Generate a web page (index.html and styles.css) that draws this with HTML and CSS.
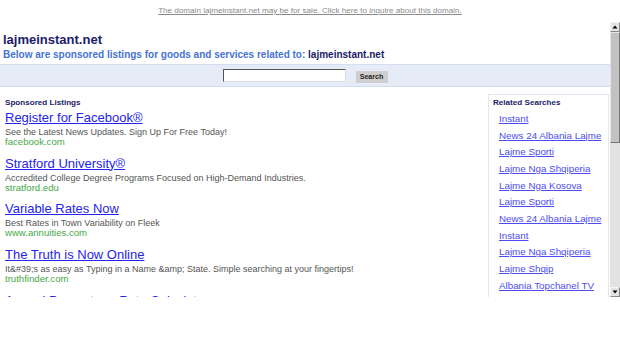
FILE: index.html
```html
<!DOCTYPE html>
<html lang="en">
<head>
    <meta charset="UTF-8">
    <meta name="viewport" content="width=device-width, initial-scale=1.0">
    <title>lajmeinstant.net</title>
    <link rel="stylesheet" href="styles.css">
</head>
<body>
    <div class="sale">
        <a href="#">The domain lajmeinstant.net may be for sale. Click here to inquire about this domain.</a>
    </div>

    <div class="frame">
        <div class="page">
            <div class="top">
                <h1>lajmeinstant.net</h1>
                <p class="intro">Below are sponsored listings for goods and services related to: <b>lajmeinstant.net</b></p>
            </div>

            <div class="search-bar">
                <input type="text" class="search-input">
                <button class="search-btn">Search</button>
            </div>

            <div class="results">
                <div class="listings">
                    <h2>Sponsored Listings</h2>

                    <div class="ad">
                        <a href="#" class="ad-title">Register for Facebook®</a>
                        <div class="ad-desc">See the Latest News Updates. Sign Up For Free Today!</div>
                        <div class="ad-url">facebook.com</div>
                    </div>
                    <div class="ad">
                        <a href="#" class="ad-title">Stratford University®</a>
                        <div class="ad-desc">Accredited College Degree Programs Focused on High-Demand Industries.</div>
                        <div class="ad-url">stratford.edu</div>
                    </div>
                    <div class="ad">
                        <a href="#" class="ad-title">Variable Rates Now</a>
                        <div class="ad-desc">Best Rates in Town Variability on Fleek</div>
                        <div class="ad-url">www.annuities.com</div>
                    </div>
                    <div class="ad">
                        <a href="#" class="ad-title">The Truth is Now Online</a>
                        <div class="ad-desc">It&amp;#39;s as easy as Typing in a Name &amp;amp; State. Simple searching at your fingertips!</div>
                        <div class="ad-url">truthfinder.com</div>
                    </div>
                    <div class="ad">
                        <a href="#" class="ad-title">Annual Percentage Rate Calculator</a>
                    </div>
                </div>

                <div class="related">
                    <h2>Related Searches</h2>
                    <ul>
                        <li><a href="#">Instant</a></li>
                        <li><a href="#">News 24 Albania Lajme</a></li>
                        <li><a href="#">Lajme Sporti</a></li>
                        <li><a href="#">Lajme Nga Shqiperia</a></li>
                        <li><a href="#">Lajme Nga Kosova</a></li>
                        <li><a href="#">Lajme Sporti</a></li>
                        <li><a href="#">News 24 Albania Lajme</a></li>
                        <li><a href="#">Instant</a></li>
                        <li><a href="#">Lajme Nga Shqiperia</a></li>
                        <li><a href="#">Lajme Shqip</a></li>
                        <li><a href="#">Albania Topchanel TV</a></li>
                    </ul>
                </div>
            </div>
        </div>

        <div class="scrollbar">
            <div class="sb-btn">
                <svg width="8" height="8" viewBox="0 0 8 8"><path d="M1.5 5.5 L4 2.5 L6.5 5.5 Z" fill="#000"/></svg>
            </div>
            <div class="sb-thumb"></div>
            <div class="sb-track"></div>
            <div class="sb-btn">
                <svg width="8" height="8" viewBox="0 0 8 8"><path d="M1.5 2.5 L4 5.5 L6.5 2.5 Z" fill="#000"/></svg>
            </div>
        </div>
    </div>
</body>
</html>
```

FILE: styles.css
```css
* {
    margin: 0;
    padding: 0;
    box-sizing: border-box;
}

body {
    font-family: "Liberation Sans", Arial, sans-serif;
    background-color: #fff;
    color: #333;
}

.sale {
    height: 20px;
    text-align: center;
    font-size: 8.1px;
    line-height: 21px;
}

.sale a {
    color: #8a8a8a;
}

.frame {
    display: flex;
    height: 277px;
    overflow: hidden;
}

.page {
    flex: 1;
    min-width: 0;
    overflow: hidden;
}

.top {
    padding: 12px 3px 3px;
}

.top h1 {
    font-size: 13px;
    line-height: 16px;
    color: #1b1b6b;
}

.intro {
    font-size: 10px;
    font-weight: bold;
    line-height: 13px;
    color: #4673d8;
}

.intro b {
    color: #1b1b6b;
}

.search-bar {
    display: flex;
    justify-content: center;
    align-items: flex-start;
    gap: 10px;
    height: 23px;
    padding-top: 4px;
    background-color: #e5ecf8;
    border-top: 1px solid #d3ddf2;
    border-bottom: 1px solid #d3ddf2;
}

.search-input {
    width: 123px;
    height: 13px;
    background: #fff;
    border: 1px solid #dcdcdc;
    border-top-color: #555;
    border-left-color: #555;
    outline: none;
}

.search-btn {
    margin-top: 2px;
    width: 32px;
    height: 12px;
    background-color: #cfcfcf;
    border: none;
    font-family: inherit;
    font-size: 7.1px;
    font-weight: bold;
    color: #222;
}

.results {
    display: flex;
}

.listings {
    flex: 1;
    padding: 11px 0 0 5px;
    white-space: nowrap;
}

h2 {
    font-size: 8.1px;
    line-height: 10px;
    color: #1b1b6b;
    margin-bottom: 3px;
}

.ad {
    margin-bottom: 9.7px;
}

.ad-title {
    display: block;
    font-size: 13px;
    line-height: 14px;
    color: #2424f0;
}

.ad-desc {
    margin-top: 2px;
    font-size: 9px;
    line-height: 10px;
    color: #555;
}

.ad-url {
    font-size: 9.6px;
    line-height: 10px;
    color: #45a845;
}

.related {
    width: 121px;
    margin: 7px 1px 0 0;
    padding: 3px 0 0 4px;
    border: 1px solid #dfe6f6;
}

.related ul {
    list-style: none;
    padding-left: 6px;
}

.related li {
    font-size: 9.8px;
    line-height: 16.67px;
}

.related li a {
    color: #4c4cf0;
}

.scrollbar {
    width: 10px;
    display: flex;
    flex-direction: column;
    padding-top: 2px;
    background: #fff;
}

.sb-btn {
    height: 10px;
    display: flex;
    align-items: center;
    justify-content: center;
    background-color: #e4e4e4;
    border: 1px solid #f4f4f4;
    border-right-color: #888;
    border-bottom-color: #888;
}

.sb-thumb {
    height: 111px;
    background-color: #c2c2c2;
    border: 1px solid #e6e6e6;
    border-right-color: #777;
    border-bottom-color: #777;
}

.sb-track {
    flex: 1;
    background-color: #e2e2e2;
}
```
